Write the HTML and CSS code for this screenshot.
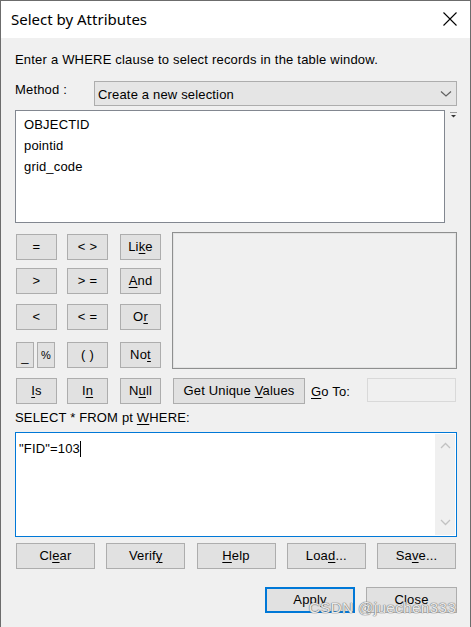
FILE: index.html
```html
<!DOCTYPE html>
<html>
<head>
<meta charset="utf-8">
<title>Select by Attributes</title>
<link rel="stylesheet" href="styles.css">
</head>
<body>
<div class="window">
  <div class="titlebar">
    <span class="title">Select by Attributes</span>
    <svg class="close" width="14" height="14" viewBox="0 0 14 14"><path d="M0.5 0.5 L13.5 13.5 M13.5 0.5 L0.5 13.5" stroke="#000" stroke-width="1.1" fill="none"/></svg>
  </div>
  <div class="content">
    <div class="instr">Enter a WHERE clause to select records in the table window.</div>
    <div class="method-row">
      <div class="method-label">Method :</div>
      <div class="combo">
        <span>Create a new selection</span>
        <svg width="12" height="8" viewBox="0 0 12 8"><path d="M1 1.5 L6 6 L11 1.5" stroke="#606060" stroke-width="1.2" fill="none"/></svg>
      </div>
    </div>
    <div class="list-row">
      <div class="listbox">
        <div class="item">OBJECTID</div>
        <div class="item">pointid</div>
        <div class="item">grid_code</div>
      </div>
      <svg class="listmenu" width="7" height="7" viewBox="0 0 7 7"><path d="M0 0.5 H7" stroke="#9a9a9a" stroke-width="1"/><path d="M1 3 H6 L3.5 5.5 Z" fill="#333"/></svg>
    </div>
    <div class="ops">
      <div class="btn op"><span>=</span></div>
      <div class="btn op"><span>&lt; &gt;</span></div>
      <div class="btn op"><span>Li<u>k</u>e</span></div>
      <div class="values"></div>
      <div class="btn op"><span>&gt;</span></div>
      <div class="btn op"><span>&gt; =</span></div>
      <div class="btn op"><span><u>A</u>nd</span></div>
      <div class="btn op"><span>&lt;</span></div>
      <div class="btn op"><span>&lt; =</span></div>
      <div class="btn op"><span>O<u>r</u></span></div>
      <div class="pair"><div class="btn small"><span>_</span></div><div class="btn small pct"><span>%</span></div></div>
      <div class="btn op"><span>( )</span></div>
      <div class="btn op"><span>No<u>t</u></span></div>
      <div class="btn op"><span><u>I</u>s</span></div>
      <div class="btn op"><span>I<u>n</u></span></div>
      <div class="btn op"><span>N<u>u</u>ll</span></div>
      <div class="goto-row">
        <div class="btn unique"><span>Get Unique <u>V</u>alues</span></div>
        <span class="goto-label"><u>G</u>o To:</span>
        <div class="goto-input"></div>
      </div>
    </div>
    <div class="sql-label">SELECT * FROM pt <u>W</u>HERE:</div>
    <div class="sqlbox">
      <div class="sqltext">"FID"=103<span class="caret"></span></div>
      <div class="vscroll">
        <svg width="11" height="7" viewBox="0 0 11 7"><path d="M1 6 L5.5 1.5 L10 6" stroke="#c2c2c2" stroke-width="1.3" fill="none"/></svg>
        <svg width="11" height="7" viewBox="0 0 11 7"><path d="M1 1 L5.5 5.5 L10 1" stroke="#c2c2c2" stroke-width="1.3" fill="none"/></svg>
      </div>
    </div>
    <div class="actions">
      <div class="btn wide"><span>Cl<u>e</u>ar</span></div>
      <div class="btn wide"><span>Verif<u>y</u></span></div>
      <div class="btn wide"><span><u>H</u>elp</span></div>
      <div class="btn wide"><span>Loa<u>d</u>...</span></div>
      <div class="btn wide"><span>Sa<u>v</u>e...</span></div>
    </div>
    <div class="footer">
      <div class="btn footbtn default"><span>Apply</span></div>
      <div class="btn footbtn"><span>Close</span></div>
      <div class="watermark">CSDN @juechen333</div>
    </div>
  </div>
</div>
</body>
</html>
```

FILE: styles.css
```css
* { box-sizing: border-box; }
html, body { margin: 0; padding: 0; background: #f0f0f0; }
body { width: 471px; height: 627px; overflow: hidden; font-family: "Liberation Sans", Arial, sans-serif; font-size: 13px; letter-spacing: 0.17px; color: #000; }
u { text-decoration: underline; text-underline-offset: 2px; }

.window { width: 471px; height: 627px; border: 1px solid #6c6c6c; border-bottom: none; background: #f0f0f0; }

.titlebar { height: 37px; background: #fff; display: flex; align-items: center; justify-content: space-between; padding: 0 13px 0 10px; }
.title { font-family: "Noto Sans", "Open Sans", sans-serif; font-size: 15px; letter-spacing: 0; color: #000; position: relative; top: -1px; }
.close { display: block; position: relative; top: -1px; }

.content { padding: 0 13px 0 14px; }

.instr { margin-top: 14px; line-height: 16px; height: 16px; letter-spacing: 0.2px; }

.method-row { display: flex; margin-top: 13px; }
.method-label { width: 79px; padding-top: 1px; line-height: 16px; }
.combo { flex: 1; height: 25px; background: #e5e5e5; border: 1px solid #adadad; display: flex; align-items: center; justify-content: space-between; padding: 1px 3px 0 3px; }
.combo svg { display: block; margin-right: 1px; }

.list-row { display: flex; margin-top: 4px; align-items: flex-start; }
.listbox { width: 430px; height: 113px; background: #fff; border: 1px solid #828790; padding: 3px 8px; }
.item { line-height: 21px; height: 21px; }
.listmenu { display: block; margin: 2px 0 0 5px; }

.ops { margin-top: 11px; margin-left: 1px; display: grid; grid-template-columns: 51px 53px 52px 1fr; grid-template-rows: 34px 36px 38px 36px 26px; }
.btn { background: #e1e1e1; border: 1px solid #adadad; height: 26px; display: flex; align-items: center; justify-content: center; line-height: 16px; white-space: nowrap; }
.op { width: 41px; }
.pair { display: flex; gap: 3px; }
.small { width: 18px; padding-top: 4px; }
.pct { padding-top: 0; font-size: 11px; }
.values { grid-column: 4; grid-row: 1 / span 4; margin-top: -2px; height: 137px; border: 1px solid #8e8f8f; background: #f0f0f0; box-shadow: inset 0 0 0 1px #e3e3e3; }
.goto-row { grid-column: 4; grid-row: 5; display: flex; align-items: center; }
.unique { width: 132px; margin-left: 1px; }
.goto-label { margin-left: 6px; width: 56px; }
.goto-input { width: 89px; height: 24px; margin-top: -2px; border: 1px solid #d9d9d9; background: #f0f0f0; }

.sql-label { margin-top: 6px; line-height: 16px; height: 16px; }
.sqlbox { margin-top: 6px; height: 105px; background: #fff; border: 1px solid #0078d7; display: flex; justify-content: space-between; padding: 1px; }
.sqltext { padding: 7px 0 0 2px; line-height: 16px; }
.caret { display: inline-block; width: 1px; height: 16px; background: #000; vertical-align: top; }
.vscroll { width: 20px; background: #f0f0f0; display: flex; flex-direction: column; align-items: center; justify-content: space-between; padding: 8px 0 9px; }
.vscroll svg { display: block; }

.actions { margin-top: 6px; margin-left: 1px; width: 440px; display: flex; justify-content: space-between; }
.wide { width: 79px; }

.footer { position: relative; margin-top: 18px; display: flex; justify-content: flex-end; gap: 11px; }
.footbtn { width: 91px; }
.default { border: 2px solid #0078d7; width: 90px; }
.watermark { position: absolute; right: 1px; top: 12px; font-family: "Liberation Sans", Arial, sans-serif; font-size: 15.5px; color: rgba(255,255,255,0.85); text-shadow: 0 0 1px #777, 0 0 1px #777, 0 0 1px #888; letter-spacing: 0.2px; }
```
